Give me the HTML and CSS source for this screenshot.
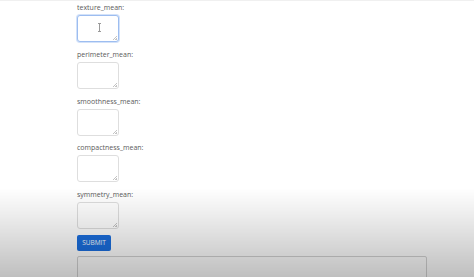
FILE: index.html
```html
<!DOCTYPE html>
<html lang="en">
<head>
  <meta charset="UTF-8">
  <meta name="viewport" content="width=device-width, initial-scale=1.0">
  <title>Prediction Form</title>
  <link rel="stylesheet" href="styles.css">
</head>
<body>
  <div class="container">
    <form class="predict-form">
      <div class="field">
        <label for="texture_mean">texture_mean:</label>
        <div class="input-wrap">
          <textarea id="texture_mean" class="focused"></textarea>
          <svg class="ibeam" width="5" height="9" viewBox="0 0 5 9">
            <path d="M1 0.5h3M2.5 0.5v8M1 8.5h3" stroke="#9a9a9a" stroke-width="1" fill="none"/>
          </svg>
        </div>
      </div>
      <div class="field">
        <label for="perimeter_mean">perimeter_mean:</label>
        <div class="input-wrap"><textarea id="perimeter_mean"></textarea></div>
      </div>
      <div class="field">
        <label for="smoothness_mean">smoothness_mean:</label>
        <div class="input-wrap"><textarea id="smoothness_mean"></textarea></div>
      </div>
      <div class="field">
        <label for="compactness_mean">compactness_mean:</label>
        <div class="input-wrap"><textarea id="compactness_mean"></textarea></div>
      </div>
      <div class="field">
        <label for="symmetry_mean">symmetry_mean:</label>
        <div class="input-wrap"><textarea id="symmetry_mean"></textarea></div>
      </div>
      <button type="button" id="submitButton">SUBMIT</button>
    </form>
    <div class="result"></div>
  </div>
  <div class="shade"></div>
</body>
</html>
```

FILE: styles.css
```css
body {
  margin: 0;
  background-color: #fff;
  font-family: "Open Sans", "Noto Sans", sans-serif;
  color: #5a5a5a;
  overflow: hidden;
}

.container {
  padding: 2px 0 0 77px;
  border-top: 1px solid #f0f0f0;
}

.field {
  margin-bottom: 7.75px;
}

.field label {
  display: block;
  font-size: 7px;
  line-height: 10px;
  height: 10px;
  margin-bottom: 2px;
}

.input-wrap {
  position: relative;
  width: 42px;
  height: 27px;
}

/* lighter resize grip than the browser one */
.input-wrap::after {
  content: "";
  position: absolute;
  right: 2px;
  bottom: 2px;
  width: 4px;
  height: 4px;
  background: linear-gradient(135deg, transparent 45%, #c4c4c4 45%, #c4c4c4 60%, transparent 60%, transparent 75%, #c4c4c4 75%);
}

.input-wrap textarea {
  display: block;
  box-sizing: border-box;
  width: 42px;
  height: 27px;
  margin: 0;
  padding: 2px;
  border: 1px solid #dedede;
  border-radius: 3px;
  background-color: #fff;
  resize: none;
  outline: none;
}

.input-wrap textarea.focused {
  border-color: #9dbdf0;
  box-shadow: 0 0 0 1px #d3e2f9;
}

.ibeam {
  position: absolute;
  left: 20px;
  top: 8px;
}

#submitButton {
  display: block;
  box-sizing: border-box;
  width: 34px;
  height: 16px;
  margin: -2px 0 0 0;
  padding: 0;
  border: none;
  border-radius: 2px;
  background-color: #1b6fdf;
  color: #fff;
  font-family: "Open Sans", "Noto Sans", sans-serif;
  font-size: 6.5px;
  cursor: pointer;
}

.result {
  box-sizing: border-box;
  width: 350px;
  height: 60px;
  margin-top: 5px;
  border: 1px solid #d4d4d4;
  border-radius: 2px;
}

.shade {
  position: fixed;
  left: 0;
  right: 0;
  top: 188px;
  bottom: 0;
  background: linear-gradient(rgba(0, 0, 0, 0), rgba(0, 0, 0, 0.07) 30%, rgba(0, 0, 0, 0.25));
  pointer-events: none;
}
```
